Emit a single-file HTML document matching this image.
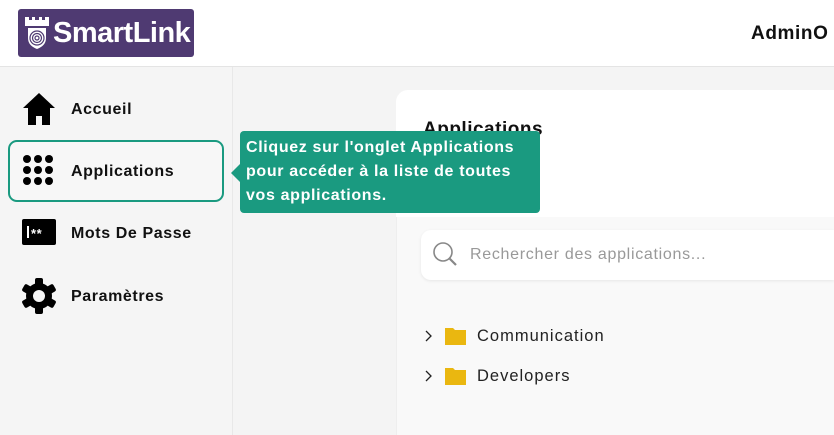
<!DOCTYPE html>
<html><head><meta charset="utf-8"><style>
*{margin:0;padding:0;box-sizing:border-box}
html,body{width:834px;height:435px;overflow:hidden}
body{background:#f4f4f4;font-family:"Liberation Sans",sans-serif;position:relative}
.hdr{position:absolute;left:0;top:0;width:834px;height:67px;background:#fff;border-bottom:1px solid #e4e4e4}
.logo{position:absolute;left:18px;top:9px;width:176px;height:48px;background:#4f3a72;border-radius:3px;color:#fff;font-weight:bold;font-size:29px;letter-spacing:-0.5px}
.logo span{position:absolute;left:35px;top:8px}
.admin{position:absolute;left:751px;top:23px;font-size:19px;font-weight:bold;color:#111;letter-spacing:.6px}
.side{position:absolute;left:0;top:67px;width:233px;height:368px;background:#f5f5f5;border-right:1px solid #e8e8e8}
.item{position:absolute;left:8px;width:216px;height:62px;font-weight:bold;font-size:16px;color:#111;letter-spacing:.6px}
.item .t{position:absolute;left:63px;top:23px}
.item svg{position:absolute;left:14px}
.sel{border:2.5px solid #1a9a80;border-radius:9px;background:#f7f7f7}
.tip{position:absolute;left:240px;top:131px;width:300px;height:82px;background:#1a9a80;border-radius:4px;color:#fff;font-weight:bold;font-size:16px;letter-spacing:.65px;line-height:24px;padding:5px 0 0 6px;white-space:nowrap}
.tip:before{content:"";position:absolute;left:-9px;top:33px;border:9px solid transparent;border-left:0;border-right-color:#1a9a80}
.card{position:absolute;left:396px;top:90px;width:438px;height:127px;background:#fff;border-radius:12px 0 0 0}
.low{position:absolute;left:396px;top:217px;width:438px;height:218px;background:#f9f9f9;border-left:1px solid #eee}
.h{position:absolute;left:423px;top:119px;font-size:19px;font-weight:bold;color:#111;letter-spacing:.5px}
.search{position:absolute;left:421px;top:230px;width:413px;height:50px;background:#fff;border-radius:10px 0 0 10px;box-shadow:0 1px 3px rgba(0,0,0,.08)}
.search span{position:absolute;left:49px;top:16px;color:#999;font-size:16px;letter-spacing:.7px}
.row{position:absolute;left:424px;font-size:16.5px;color:#222;letter-spacing:1px}
.row .t{position:absolute;left:53px;top:1px;white-space:nowrap}
</style></head><body>
<div class="hdr">
 <div class="logo">
  <svg width="26" height="36" viewBox="0 0 26 36" style="position:absolute;left:6px;top:6px"><path d="M1 2h4v3h3V2h3v3h4V2h3v3h3V2h4v9H1z" fill="#fff"/><path d="M4 13h18v10c0 6-4 9-9 11-5-2-9-5-9-11z" fill="#fff"/><g fill="none" stroke="#4f3a72" stroke-width="1.2"><circle cx="13" cy="23" r="2"/><circle cx="13" cy="23" r="4.5"/><circle cx="13" cy="23" r="7"/></g></svg>
  <span>SmartLink</span>
 </div>
 <div class="admin">AdminO</div>
</div>
<div class="side">
 <div class="item" style="top:11px"><svg width="34" height="34" viewBox="0 0 34 34" style="top:14px"><path d="M17 1L1 16h5v17h8v-9h6v9h8V16h5z" fill="#000"/></svg><span class="t">Accueil</span></div>
 <div class="item sel" style="top:73px"><svg width="34" height="34" viewBox="0 0 34 34" style="left:12px;top:12px"><g fill="#000"><circle cx="5" cy="5" r="4"/><circle cx="16" cy="5" r="4"/><circle cx="27" cy="5" r="4"/><circle cx="5" cy="16" r="4"/><circle cx="16" cy="16" r="4"/><circle cx="27" cy="16" r="4"/><circle cx="5" cy="27" r="4"/><circle cx="16" cy="27" r="4"/><circle cx="27" cy="27" r="4"/></g></svg><span class="t" style="left:61px;top:21px">Applications</span></div>
 <div class="item" style="top:135px"><svg width="34" height="26" viewBox="0 0 34 26" style="top:17px"><rect x="0" y="0" width="34" height="26" rx="2" fill="#000"/><rect x="5" y="7" width="2" height="12" fill="#fff"/><text x="9" y="19" fill="#fff" font-size="13" font-weight="bold" font-family="Liberation Sans">**</text></svg><span class="t">Mots De Passe</span></div>
 <div class="item" style="top:198px"><svg width="38" height="38" viewBox="0 0 38 38" style="left:12px;top:12px"><g fill="#000"><circle cx="19" cy="19" r="13"/><g><rect x="15" y="1" width="8" height="36" rx="2"/><rect x="15" y="1" width="8" height="36" rx="2" transform="rotate(60 19 19)"/><rect x="15" y="1" width="8" height="36" rx="2" transform="rotate(120 19 19)"/></g></g><circle cx="19" cy="19" r="6" fill="#f5f5f5"/></svg><span class="t">Paramètres</span></div>
</div>
<div class="card"></div>
<div class="low"></div>
<div class="h">Applications</div>
<div class="tip">Cliquez sur l'onglet Applications<br>pour accéder à la liste de toutes<br>vos applications.</div>
<div class="search"><svg width="28" height="28" viewBox="0 0 28 28" style="position:absolute;left:11px;top:11px"><circle cx="11" cy="11" r="9" fill="none" stroke="#888" stroke-width="1.6"/><path d="M17.5 17.5L24 24" stroke="#888" stroke-width="2.2"/></svg><span>Rechercher des applications...</span></div>
<div class="row" style="top:326px"><svg width="44" height="20" viewBox="0 0 44 20"><path d="M2 5l5 5-5 5" fill="none" stroke="#222" stroke-width="1.3"/><path d="M21 2h8l2 2h11v15H21z" fill="#eab710"/></svg><span class="t">Communication</span></div>
<div class="row" style="top:366px"><svg width="44" height="20" viewBox="0 0 44 20"><path d="M2 5l5 5-5 5" fill="none" stroke="#222" stroke-width="1.3"/><path d="M21 2h8l2 2h11v15H21z" fill="#eab710"/></svg><span class="t">Developers</span></div>
</body></html>
